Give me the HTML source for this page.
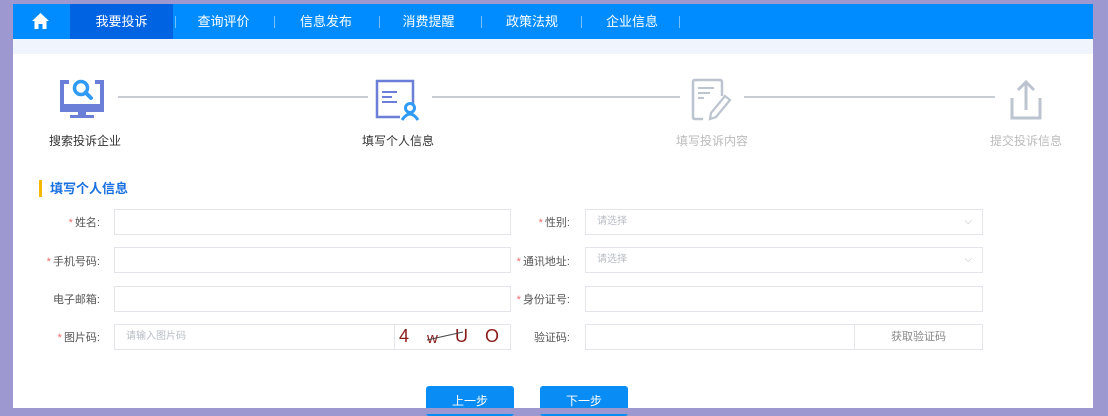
<!DOCTYPE html>
<html><head><meta charset="utf-8"><style>
*{margin:0;padding:0;box-sizing:border-box}
body{width:1108px;height:414px;overflow:hidden;background:#9d99d0;font-family:"Liberation Sans","Noto Sans CJK SC",sans-serif;position:relative}
.a{position:absolute}
.panel{left:13px;top:4px;width:1080px;height:404px;background:#fff}
.nav{left:13px;top:4px;width:1080px;height:35px;background:#008cff}
.band{left:13px;top:39px;width:1080px;height:15px;background:#f0f4fc}
.ni{top:4px;height:35px;line-height:35px;color:#fff;font-size:13px;text-align:center}
.sep{top:16px;width:1px;height:12px;background:rgba(255,255,255,.45)}
.line{height:2px;background:#c8ccd3;top:96px}
.lbl{font-size:12px;top:132px;text-align:center;width:120px}
.fl{font-size:11px;color:#555;text-align:right;width:90px}
.fl b{color:#f56c6c;font-weight:normal;margin-right:2px}
.in{border:1px solid #e3e5ea;background:#fff;height:26px;font-size:10px;color:#b8bcc4;line-height:24px;padding-left:11px}
.btn{background:#0a8cf5;border-radius:3px;color:#fff;font-size:12px;text-align:center;line-height:30px;width:88px;height:30px;top:386px}
</style></head><body>
<div class="a panel"></div>
<div class="a nav"></div>
<div class="a band"></div>
<div class="a" style="left:70px;top:4px;width:103px;height:35px;background:#0063e1"></div>
<svg class="a" style="left:31px;top:12px" width="19" height="18" viewBox="0 0 19 18"><path d="M9.5 1 L1 9 H3.5 V17 H7.5 V12 H11.5 V17 H15.5 V9 H18 Z" fill="#fff"/></svg>
<div class="a ni" style="left:70px;width:103px">我要投诉</div>
<div class="a sep" style="left:175px"></div>
<div class="a ni" style="left:175px;width:97px">查询评价</div>
<div class="a sep" style="left:274px"></div>
<div class="a ni" style="left:276px;width:100px">信息发布</div>
<div class="a sep" style="left:379px"></div>
<div class="a ni" style="left:378px;width:101px">消费提醒</div>
<div class="a sep" style="left:481px"></div>
<div class="a ni" style="left:482px;width:100px">政策法规</div>
<div class="a sep" style="left:581px"></div>
<div class="a ni" style="left:582px;width:100px">企业信息</div>
<div class="a sep" style="left:679px"></div>

<div class="a line" style="left:118px;width:250px"></div>
<div class="a line" style="left:432px;width:248px"></div>
<div class="a line" style="left:744px;width:251px"></div>

<svg class="a" style="left:56px;top:75px" width="50" height="50" viewBox="0 0 50 50">
<path d="M13 7 H6 V35 H46 V7 H39" fill="none" stroke="#6b7fd8" stroke-width="4"/>
<rect x="6" y="29" width="40" height="6" fill="#6b7fd8"/>
<rect x="22" y="35" width="8" height="5" fill="#6b7fd8"/><rect x="14" y="40" width="24" height="3" fill="#6b7fd8"/>
<circle cx="25" cy="13" r="6.5" fill="none" stroke="#2f9bf5" stroke-width="3.5"/><path d="M29.5 17.5 L35 23" stroke="#2f9bf5" stroke-width="4" stroke-linecap="round"/>
</svg>
<div class="a lbl" style="left:25px;color:#333">搜索投诉企业</div>

<svg class="a" style="left:373px;top:78px" width="50" height="46" viewBox="0 0 50 46">
<path d="M40 26 V3 H4 V39 H27" fill="none" stroke="#6b7fd8" stroke-width="2.5"/>
<path d="M9 14 H24 M9 19 H19 M9 24 H24" stroke="#6b7fd8" stroke-width="2"/>
<circle cx="37" cy="30" r="4.5" fill="none" stroke="#2f9bf5" stroke-width="3"/><path d="M29 42 Q37 30 45 42" fill="none" stroke="#2f9bf5" stroke-width="3"/>
</svg>
<div class="a lbl" style="left:338px;color:#333">填写个人信息</div>

<svg class="a" style="left:688px;top:78px" width="48" height="45" viewBox="0 0 48 45">
<path d="M34 18 V4 Q34 2 32 2 H7 Q5 2 5 4 V39 Q5 41 7 41 H15" fill="none" stroke="#bcc4d0" stroke-width="2.5"/>
<path d="M10 10 H26 M10 15 H22 M10 20 H16" stroke="#bcc4d0" stroke-width="2"/>
<path d="M37 18 L42 22 L28 39 L22 41 L23 35 Z" fill="none" stroke="#bcc4d0" stroke-width="2.2"/>
</svg>
<div class="a lbl" style="left:652px;color:#bbb">填写投诉内容</div>

<svg class="a" style="left:1006px;top:78px" width="40" height="44" viewBox="0 0 40 44">
<path d="M6 20 V40 H34 V20" fill="none" stroke="#bcc4d0" stroke-width="3"/>
<path d="M20 32 V4 M12 12 L20 4 L28 12" fill="none" stroke="#bcc4d0" stroke-width="3"/>
</svg>
<div class="a lbl" style="left:966px;color:#bbb">提交投诉信息</div>

<div class="a" style="left:39px;top:180px;width:3px;height:17px;background:#f5b800"></div>
<div class="a" style="left:50px;top:180px;font-size:13px;font-weight:bold;color:#1a70e0;line-height:17px">填写个人信息</div>

<div class="a fl" style="left:10px;top:214px"><b>*</b>姓名:</div>
<div class="a fl" style="left:10px;top:253px"><b>*</b>手机号码:</div>
<div class="a fl" style="left:10px;top:291px">电子邮箱:</div>
<div class="a fl" style="left:10px;top:329px"><b>*</b>图片码:</div>
<div class="a fl" style="left:480px;top:214px"><b>*</b>性别:</div>
<div class="a fl" style="left:480px;top:253px"><b>*</b>通讯地址:</div>
<div class="a fl" style="left:480px;top:291px"><b>*</b>身份证号:</div>
<div class="a fl" style="left:480px;top:329px">验证码:</div>

<div class="a in" style="left:114px;top:209px;width:397px"></div>
<div class="a in" style="left:114px;top:247px;width:397px"></div>
<div class="a in" style="left:114px;top:286px;width:397px"></div>
<div class="a in" style="left:114px;top:324px;width:397px">请输入图片码</div>
<div class="a" style="left:394px;top:325px;width:116px;height:24px;border-left:1px solid #e3e5ea;font-family:'Liberation Sans',sans-serif;color:#8b1a1a;font-size:18px;line-height:22px">
<span style="position:absolute;left:4px">4</span><span style="position:absolute;left:32px;top:3px;font-size:15px">w</span><span style="position:absolute;left:60px">U</span><span style="position:absolute;left:90px">O</span>
<svg style="position:absolute;left:30px;top:5px" width="40" height="12"><path d="M2 10 L38 2" stroke="#444" stroke-width="1"/></svg></div>

<div class="a in" style="left:585px;top:209px;width:398px">请选择<span style="position:absolute;right:10px;top:0;color:#bbb">⌵</span></div>
<div class="a in" style="left:585px;top:247px;width:398px">请选择<span style="position:absolute;right:10px;top:0;color:#bbb">⌵</span></div>
<div class="a in" style="left:585px;top:286px;width:398px"></div>
<div class="a in" style="left:585px;top:324px;width:398px"></div>
<div class="a" style="left:854px;top:325px;width:128px;height:24px;border-left:1px solid #e3e5ea;font-size:11px;color:#888;text-align:center;line-height:24px">获取验证码</div>

<div class="a btn" style="left:426px">上一步</div>
<div class="a btn" style="left:540px">下一步</div>
<div class="a" style="left:0;top:408px;width:1108px;height:6px;background:#9d99d0"></div>
</body></html>
